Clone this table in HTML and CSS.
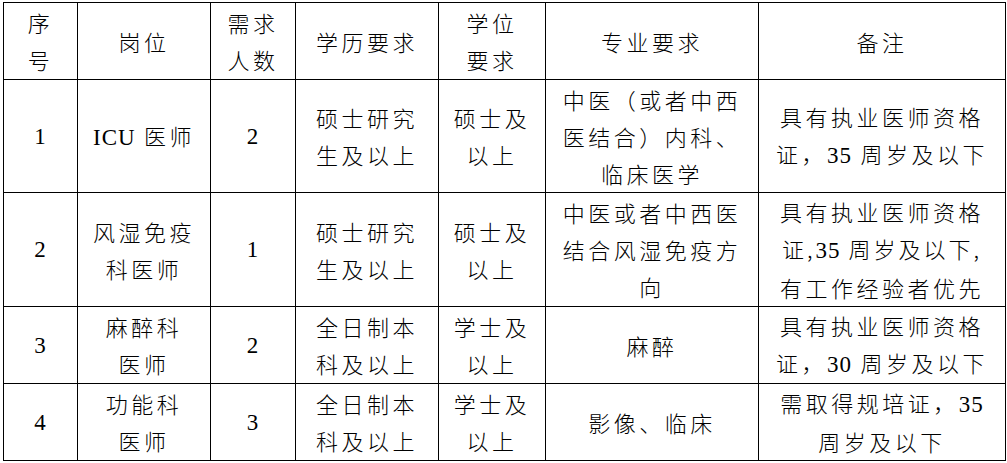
FILE: index.html
```html
<!DOCTYPE html>
<html lang="zh-CN">
<head>
<meta charset="utf-8">
<title>招聘岗位</title>
<link rel="stylesheet" href="styles.css">
</head>
<body>
<table class="jobs">
  <colgroup>
    <col class="c1"><col class="c2"><col class="c3"><col class="c4"><col class="c5"><col class="c6"><col class="c7">
  </colgroup>
  <tr class="r-head">
    <td>序<br>号</td>
    <td>岗位</td>
    <td>需求<br>人数</td>
    <td>学历要求</td>
    <td>学位<br>要求</td>
    <td>专业要求</td>
    <td>备注</td>
  </tr>
  <tr class="r1">
    <td class="lat">1</td>
    <td><span class="lat">ICU</span> 医师</td>
    <td class="lat">2</td>
    <td>硕士研究<br>生及以上</td>
    <td>硕士及<br>以上</td>
    <td>中医（或者中西<br>医结合）内科、<br>临床医学</td>
    <td>具有执业医师资格<br>证，<span class="lat">35</span> 周岁及以下</td>
  </tr>
  <tr class="r2">
    <td class="lat">2</td>
    <td>风湿免疫<br>科医师</td>
    <td class="lat">1</td>
    <td>硕士研究<br>生及以上</td>
    <td>硕士及<br>以上</td>
    <td>中医或者中西医<br>结合风湿免疫方<br>向</td>
    <td>具有执业医师资格<br><span class="tight">证,<span class="lat">35</span> 周岁及以下,</span><br>有工作经验者优先</td>
  </tr>
  <tr class="r3">
    <td class="lat">3</td>
    <td>麻醉科<br>医师</td>
    <td class="lat">2</td>
    <td>全日制本<br>科及以上</td>
    <td>学士及<br>以上</td>
    <td>麻醉</td>
    <td>具有执业医师资格<br>证，<span class="lat">30</span> 周岁及以下</td>
  </tr>
  <tr class="r4">
    <td class="lat">4</td>
    <td>功能科<br>医师</td>
    <td class="lat">3</td>
    <td>全日制本<br>科及以上</td>
    <td>学士及<br>以上</td>
    <td>影像、临床</td>
    <td>需取得规培证，<span class="lat">35</span><br>周岁及以下</td>
  </tr>
</table>
</body>
</html>
```

FILE: styles.css
```css
html, body {
  margin: 0;
  padding: 0;
  background: #ffffff;
}

body {
  padding: 2px 0 0 3px;
  font-family: "Noto Sans CJK SC", "Noto Sans", sans-serif;
  color: #000000;
}

.jobs {
  border-collapse: collapse;
  table-layout: fixed;
  width: 1003px;
  font-size: 22px;
  letter-spacing: 3.5px;
  line-height: 37px;
  font-weight: 300;
}

.jobs td {
  border: 1.5px solid #000000;
  padding: 0;
  text-align: center;
  vertical-align: middle;
  white-space: nowrap;
  overflow: hidden;
}

.c1 { width: 74px; }
.c2 { width: 133px; }
.c3 { width: 85px; }
.c4 { width: 143px; }
.c5 { width: 107px; }
.c6 { width: 213px; }
.c7 { width: 247px; }

.r-head { height: 77px; }
.r1 { height: 113px; }
.r2 { height: 114px; }
.r3 { height: 77px; }
.r4 { height: 76px; }

.lat {
  font-family: "Liberation Serif", "Times New Roman", serif;
  font-size: 23px;
  font-weight: 400;
  letter-spacing: 1px;
}

.tight {
  letter-spacing: 3px;
}
```
